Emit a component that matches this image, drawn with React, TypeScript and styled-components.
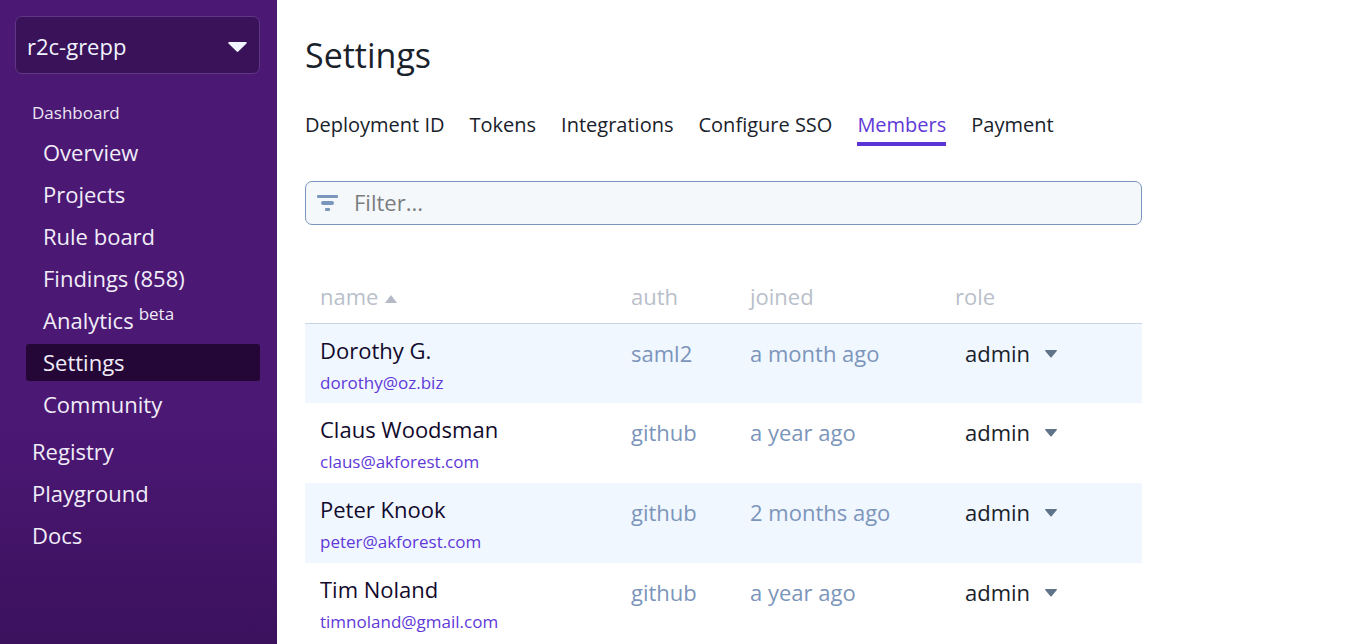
import React from "react";
import styled, { createGlobalStyle } from "styled-components";

const GlobalStyle = createGlobalStyle`
  *, *::before, *::after { box-sizing: border-box; }
  body {
    margin: 0;
    background: #ffffff;
    color: #19222b;
    font-family: "Open Sans", "Noto Sans", sans-serif;
  }
`;

const Page = styled.div`
  display: flex;
  height: 100vh;
  overflow: hidden;
`;

const Sidebar = styled.aside`
  flex: 0 0 277px;
  padding: 16px 17px 0 15px;
  background: linear-gradient(to bottom, #4b1874 0, #4b1874 66%, #3b115d 100%);
`;

const SelectWrap = styled.div`
  display: grid;
  align-items: center;

  > * { grid-area: 1 / 1; }
`;

const Caret = styled.svg<{ $inset: number }>`
  justify-self: end;
  margin-right: ${(p) => p.$inset}px;
  pointer-events: none;
  fill: currentColor;
`;

const OrgPicker = styled(SelectWrap)`
  color: #f1f4ff;
`;

const OrgSelect = styled.select`
  appearance: none;
  width: 100%;
  height: 58px;
  padding: 2px 44px 0 11px;
  border: 1px solid #5f3784;
  border-radius: 7px;
  background: #3a1259;
  color: inherit;
  font: 22px/32px "Open Sans", sans-serif;
`;

const NavHeading = styled.h2`
  margin: 27px 0 9px 17px;
  color: #ece6f5;
  font-size: 17px;
  font-weight: 400;
  line-height: 24px;
`;

const NavList = styled.ul`
  display: flex;
  flex-direction: column;
  gap: 5px;
  margin: 0 0 10px 11px;
  padding: 0;
  list-style: none;
`;

const NavLink = styled.a<{ $active?: boolean; $top?: boolean }>`
  display: block;
  height: 37px;
  padding-left: ${(p) => (p.$top ? 6 : 17)}px;
  border-radius: 3px;
  background: ${(p) => (p.$active ? "#240736" : "transparent")};
  color: #f1edf8;
  font-size: 22px;
  line-height: 36px;
  text-decoration: none;
`;

const Beta = styled.sup`
  margin-left: 5px;
  font-size: 17px;
  line-height: 0;
  vertical-align: 9px;
`;

const Main = styled.main`
  flex: 1;
  padding: 28px 28px 0;
`;

const Content = styled.div`
  max-width: 837px;
`;

const Title = styled.h1`
  margin: 0;
  font-size: 34px;
  font-weight: 400;
  line-height: 54px;
`;

const Tabs = styled.nav`
  display: flex;
  gap: 25px;
  margin-top: 26px;
`;

const Tab = styled.a<{ $active?: boolean }>`
  border-bottom: 4px solid ${(p) => (p.$active ? "#5c33d6" : "transparent")};
  color: ${(p) => (p.$active ? "#6039d8" : "#19222b")};
  font-size: 20px;
  line-height: 34px;
  text-decoration: none;
  white-space: nowrap;
`;

const FilterBox = styled.label`
  display: flex;
  align-items: center;
  height: 44px;
  margin-top: 35px;
  padding: 0 11px;
  border: 1px solid #7b96bd;
  border-radius: 7px;
  background: #f4f8fb;
`;

const FilterInput = styled.input`
  flex: 1;
  min-width: 0;
  margin-left: 16px;
  padding: 0 0 2px;
  border: 0;
  outline: 0;
  background: transparent;
  font: 22px/32px "Open Sans", sans-serif;

  &::placeholder { color: #7b7d80; opacity: 1; }
`;

const Table = styled.table`
  width: 100%;
  margin-top: 45px;
  border-collapse: collapse;
  table-layout: fixed;
  font-size: 22px;
`;

const HeadCell = styled.th<{ $width?: number }>`
  width: ${(p) => (p.$width ? `${p.$width}px` : "auto")};
  height: 53px;
  padding: 0 0 0 15px;
  border-bottom: 1px solid #c9d5e3;
  color: #b9bfca;
  font-weight: 400;
  line-height: 32px;
  text-align: left;
`;

const SortArrow = styled.svg`
  margin-left: 7px;
  fill: #b3bac6;
  vertical-align: 2px;
`;

const Row = styled.tr`
  height: 80px;

  &:nth-child(odd) { background: #f0f7ff; }
`;

const Cell = styled.td`
  padding: 13px 0 0 15px;
  color: #7c95bb;
  line-height: 32px;
  vertical-align: top;
`;

const NameCell = styled(Cell)`
  padding-top: 10px;
  color: #120a2c;
`;

const Email = styled.a`
  display: block;
  color: #6039d8;
  font-size: 17px;
  line-height: 34px;
  text-decoration: none;
`;

const RolePicker = styled(SelectWrap)`
  width: 102px;
  color: #5f7488;
`;

const RoleSelect = styled.select`
  appearance: none;
  width: 100%;
  height: 32px;
  padding: 0 0 0 10px;
  border: 0;
  background: transparent;
  color: #19222b;
  font: 22px/32px "Open Sans", sans-serif;
`;

const DASHBOARD_LINKS = ["Overview", "Projects", "Rule board", "Findings (858)", "Analytics", "Settings", "Community"];
const TOP_LINKS = ["Registry", "Playground", "Docs"];
const TABS = ["Deployment ID", "Tokens", "Integrations", "Configure SSO", "Members", "Payment"];
const MEMBERS = [
  { name: "Dorothy G.", email: "dorothy@oz.biz", auth: "saml2", joined: "a month ago" },
  { name: "Claus Woodsman", email: "claus@akforest.com", auth: "github", joined: "a year ago" },
  { name: "Peter Knook", email: "peter@akforest.com", auth: "github", joined: "2 months ago" },
  { name: "Tim Noland", email: "timnoland@gmail.com", auth: "github", joined: "a year ago" },
];

export default function App() {
  return (
    <Page>
      <GlobalStyle />
      <Sidebar>
        <OrgPicker>
          <OrgSelect aria-label="Organization">
            <option>r2c-grepp</option>
          </OrgSelect>
          <Caret $inset={13} width="19" height="14" viewBox="0 -4 19 14" aria-hidden="true">
            <path d="M1.2 0h16.6c.9 0 1.3.9.7 1.5l-8.2 8.1c-.5.5-1.1.5-1.6 0L.5 1.5C-.1.9.3 0 1.2 0z" />
          </Caret>
        </OrgPicker>
        <nav aria-label="Main">
          <NavHeading>Dashboard</NavHeading>
          <NavList>
            {DASHBOARD_LINKS.map((label) => (
              <li key={label}>
                <NavLink href="#" $active={label === "Settings"}>
                  {label}
                  {label === "Analytics" && <Beta>beta</Beta>}
                </NavLink>
              </li>
            ))}
          </NavList>
          <NavList>
            {TOP_LINKS.map((label) => (
              <li key={label}>
                <NavLink href="#" $top>{label}</NavLink>
              </li>
            ))}
          </NavList>
        </nav>
      </Sidebar>
      <Main>
        <Content>
          <Title>Settings</Title>
          <Tabs aria-label="Settings sections">
            {TABS.map((label) => (
              <Tab key={label} href="#" $active={label === "Members"}>{label}</Tab>
            ))}
          </Tabs>
          <FilterBox>
            <svg width="21" height="16" viewBox="0 0 21 16" fill="#7b96bd" aria-hidden="true">
              <rect x="0" y="0" width="21" height="3" rx="1" />
              <rect x="4" y="6" width="13" height="4" rx="2" />
              <rect x="8" y="13" width="5" height="3" rx="1" />
            </svg>
            <FilterInput type="text" aria-label="Filter members" placeholder="Filter..." />
          </FilterBox>
          <Table>
            <thead>
              <tr>
                <HeadCell>
                  name
                  <SortArrow width="12" height="8" viewBox="0 0 12 8" aria-hidden="true">
                    <path d="M6 0l6 8H0z" />
                  </SortArrow>
                </HeadCell>
                <HeadCell $width={119}>auth</HeadCell>
                <HeadCell $width={205}>joined</HeadCell>
                <HeadCell $width={202}>role</HeadCell>
              </tr>
            </thead>
            <tbody>
              {MEMBERS.map((m) => (
                <Row key={m.email}>
                  <NameCell>
                    {m.name}
                    <Email href={`mailto:${m.email}`}>{m.email}</Email>
                  </NameCell>
                  <Cell>{m.auth}</Cell>
                  <Cell>{m.joined}</Cell>
                  <Cell>
                    <RolePicker>
                      <RoleSelect aria-label={`Role of ${m.name}`}>
                        <option>admin</option>
                      </RoleSelect>
                      <Caret $inset={0} width="12" height="10" viewBox="0 -2 12 10" aria-hidden="true">
                        <path d="M.7 0h10.6c.6 0 .9.6.5 1.1L6.6 7.3c-.3.4-.9.4-1.2 0L.2 1.1C-.2.6.1 0 .7 0z" />
                      </Caret>
                    </RolePicker>
                  </Cell>
                </Row>
              ))}
            </tbody>
          </Table>
        </Content>
      </Main>
    </Page>
  );
}
